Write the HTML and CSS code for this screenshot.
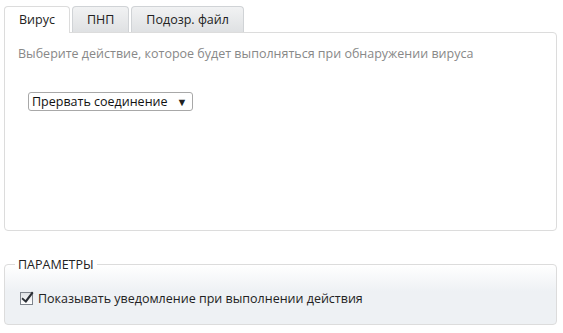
FILE: index.html
```html
<!DOCTYPE html>
<html lang="ru">
<head>
    <meta charset="UTF-8">
    <title>Действие при обнаружении</title>
    <link rel="stylesheet" href="styles.css">
</head>
<body>
    <div class="tabs">
        <div class="tab active">Вирус</div>
        <div class="tab">ПНП</div>
        <div class="tab">Подозр. файл</div>
    </div>

    <!-- содержимое активной вкладки -->
    <div class="panel">
        <p class="hint">Выберите действие, которое будет выполняться при обнаружении вируса</p>
        <div class="select">
            <span>Прервать соединение</span>
            <span class="arrow">&#9660;</span>
        </div>
    </div>

    <fieldset class="params">
        <legend>ПАРАМЕТРЫ</legend>
        <label class="check">
            <span class="box">
                <svg width="13" height="13" viewBox="0 0 13 13">
                    <path d="M1.5 6.5 L4.5 9 L11 0.5 L12.5 2 L5 12 L0.5 8 Z" fill="#2b2f36"/>
                </svg>
            </span>
            Показывать уведомление при выполнении действия
        </label>
    </fieldset>
</body>
</html>
```

FILE: styles.css
```css
body {
    margin: 0;
    padding: 6px 6px 0 4px;
    background-color: #fff;
    font-family: 'Open Sans', 'Noto Sans', sans-serif;
    font-size: 12.5px;
    color: #222;
}

.tabs {
    display: flex;
    gap: 1px;
    position: relative;
    z-index: 1;
}

.tab {
    height: 25px;
    line-height: 25px;
    padding: 0 14px;
    border: 1px solid #d0d3d6;
    border-bottom: none;
    border-radius: 4px 4px 0 0;
    background: linear-gradient(#f1f2f3, #dfe1e3);
    color: #222;
}

.tab + .tab {
    margin-left: 1px;
}

.tab.active {
    background: #fff;
    height: 26px;
    margin-bottom: -1px;
    border-color: #dcdcdc;
}

.panel {
    height: 197px;
    border: 1px solid #dcdcdc;
    border-radius: 0 4px 4px 4px;
    padding: 0 13px;
}

.hint {
    margin: 12px 0 0 0;
    color: #888;
}

.select {
    display: inline-flex;
    align-items: center;
    gap: 9px;
    margin: 30px 0 0 10px;
    box-sizing: border-box;
    height: 19px;
    padding: 0 5px 0 3px;
    border: 1px solid #a8a8a8;
    border-radius: 3px;
    color: #111;
}

.arrow {
    font-size: 11px;
    color: #222;
}

.params {
    margin: 25px 0 0 0;
    padding: 17px 14px 26px 15px;
    height: 24px;
    border: 1px solid #dcdcdc;
    border-radius: 4px;
    background: linear-gradient(#fff, #eef1f4 45%);
}

.params legend {
    padding: 0 3px;
    margin-left: -5px;
    color: #222;
}

.check {
    display: flex;
    align-items: center;
    gap: 5px;
}

.box {
    display: inline-block;
    width: 11px;
    height: 11px;
    border: 1px solid #7e848c;
    background: linear-gradient(#dfe2e5, #fff);
    position: relative;
}

.box svg {
    position: absolute;
    left: 0;
    top: -2px;
}
```
